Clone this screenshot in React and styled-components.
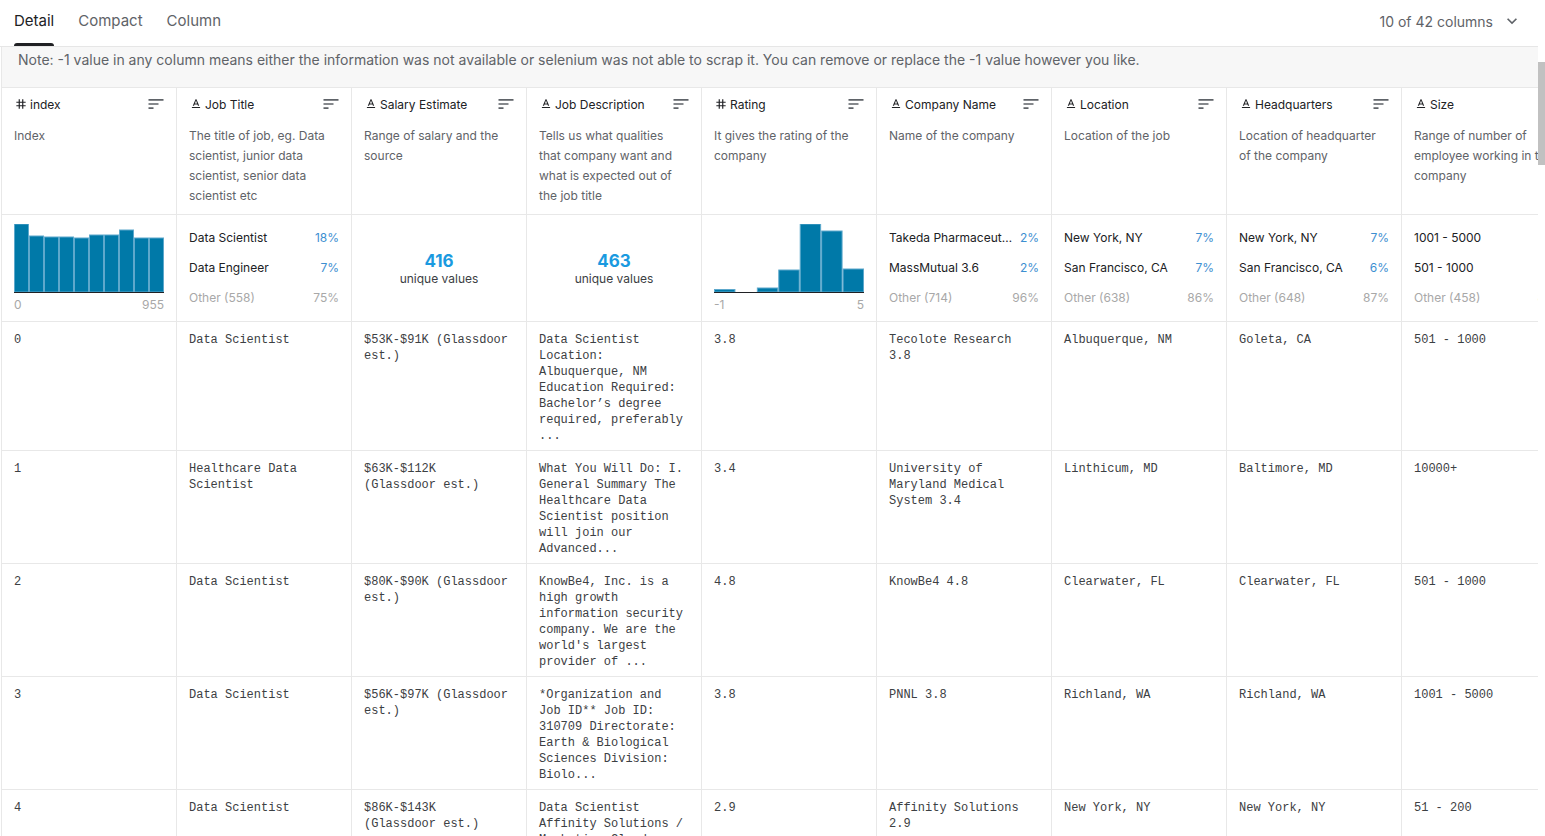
import React from "react";
import styled, { createGlobalStyle, css } from "styled-components";
import { MdTag, MdTextFormat, MdSort, MdExpandMore } from "react-icons/md";

const GlobalStyle = createGlobalStyle`
  *, *::before, *::after { box-sizing: border-box; }
  html, body {
    margin: 0;
    padding: 0;
    height: 100%;
    overflow: hidden;
    background: #fff;
  }
  body {
    font-family: Inter, "Noto Sans", sans-serif;
    color: #202124;
  }
`;

const columns = [
  {
    name: "index",
    type: "num",
    desc: "Index",
    summary: { kind: "hist", bars: [68, 56, 55, 55, 54, 57, 57, 62, 54, 54], min: "0", max: "955" },
  },
  {
    name: "Job Title",
    type: "str",
    desc: "The title of job, eg. Data scientist, junior data scientist, senior data scientist etc",
    summary: {
      kind: "cat",
      items: [["Data Scientist", "18%"], ["Data Engineer", "7%"]],
      other: ["Other (558)", "75%"],
    },
  },
  {
    name: "Salary Estimate",
    type: "str",
    desc: "Range of salary and the source",
    summary: { kind: "unique", count: 416 },
  },
  {
    name: "Job Description",
    type: "str",
    desc: "Tells us what qualities that company want and what is expected out of the job title",
    summary: { kind: "unique", count: 463 },
  },
  {
    name: "Rating",
    type: "num",
    desc: "It gives the rating of the company",
    summary: { kind: "hist", bars: [2.5, 0, 4, 22, 68, 61, 23], min: "-1", max: "5" },
  },
  {
    name: "Company Name",
    type: "str",
    desc: "Name of the company",
    summary: {
      kind: "cat",
      items: [["Takeda Pharmaceuticals 3.7", "2%"], ["MassMutual 3.6", "2%"]],
      other: ["Other (714)", "96%"],
    },
  },
  {
    name: "Location",
    type: "str",
    desc: "Location of the job",
    summary: {
      kind: "cat",
      items: [["New York, NY", "7%"], ["San Francisco, CA", "7%"]],
      other: ["Other (638)", "86%"],
    },
  },
  {
    name: "Headquarters",
    type: "str",
    desc: "Location of headquarter of the company",
    summary: {
      kind: "cat",
      items: [["New York, NY", "7%"], ["San Francisco, CA", "6%"]],
      other: ["Other (648)", "87%"],
    },
  },
  {
    name: "Size",
    type: "str",
    desc: "Range of number of employee working in the company",
    summary: {
      kind: "cat",
      items: [["1001 - 5000", "9%"], ["501 - 1000", "8%"]],
      other: ["Other (458)", "83%"],
    },
  },
];

const rows = [
  [
    "0",
    "Data Scientist",
    "$53K-$91K (Glassdoor\nest.)",
    "Data Scientist\nLocation:\nAlbuquerque, NM\nEducation Required:\nBachelor’s degree\nrequired, preferably\n...",
    "3.8",
    "Tecolote Research\n3.8",
    "Albuquerque, NM",
    "Goleta, CA",
    "501 - 1000",
  ],
  [
    "1",
    "Healthcare Data\nScientist",
    "$63K-$112K\n(Glassdoor est.)",
    "What You Will Do: I.\nGeneral Summary The\nHealthcare Data\nScientist position\nwill join our\nAdvanced...",
    "3.4",
    "University of\nMaryland Medical\nSystem 3.4",
    "Linthicum, MD",
    "Baltimore, MD",
    "10000+",
  ],
  [
    "2",
    "Data Scientist",
    "$80K-$90K (Glassdoor\nest.)",
    "KnowBe4, Inc. is a\nhigh growth\ninformation security\ncompany. We are the\nworld's largest\nprovider of ...",
    "4.8",
    "KnowBe4 4.8",
    "Clearwater, FL",
    "Clearwater, FL",
    "501 - 1000",
  ],
  [
    "3",
    "Data Scientist",
    "$56K-$97K (Glassdoor\nest.)",
    "*Organization and\nJob ID** Job ID:\n310709 Directorate:\nEarth & Biological\nSciences Division:\nBiolo...",
    "3.8",
    "PNNL 3.8",
    "Richland, WA",
    "Richland, WA",
    "1001 - 5000",
  ],
  [
    "4",
    "Data Scientist",
    "$86K-$143K\n(Glassdoor est.)",
    "Data Scientist\nAffinity Solutions /\nMarketing Cloud\nSeeks a...",
    "2.9",
    "Affinity Solutions\n2.9",
    "New York, NY",
    "New York, NY",
    "51 - 200",
  ],
];

const Page = styled.div`
  display: flex;
  height: 836px;
  overflow: hidden;
`;

const Main = styled.div`
  width: 1538px;
  flex: none;
  display: flex;
  flex-direction: column;
  overflow: hidden;
`;

const ScrollTrack = styled.div`
  flex: 1;
  background: #fff;
`;

const ScrollThumb = styled.div`
  margin-top: 62px;
  height: 103px;
  background: #c1c1c1;
`;

const TabBar = styled.div`
  height: 47px;
  flex: none;
  display: flex;
  justify-content: space-between;
  align-items: stretch;
  padding: 0 16px 0 14px;
  border-bottom: 1px solid #e6e6e6;
`;

const Tabs = styled.div`
  display: flex;
  gap: 24px;
`;

const Tab = styled.div`
  position: relative;
  padding-top: 11px;
  font-size: 15px;
  line-height: 20px;
  color: ${({ $active }) => ($active ? "#202124" : "#5f6368")};

  ${({ $active }) =>
    $active &&
    css`
      &::after {
        content: "";
        position: absolute;
        left: 0;
        right: 0;
        bottom: 0;
        height: 3px;
        border-radius: 3px 3px 0 0;
        background: #202124;
      }
    `}
`;

const ColumnPicker = styled.div`
  display: flex;
  align-items: center;
  gap: 9px;
  padding-bottom: 4px;
  font-size: 14px;
  color: #5f6368;

  svg {
    width: 20px;
    height: 20px;
    color: #5f6368;
  }
`;

const ScrollArea = styled.div`
  flex: 1;
  margin-left: 1px;
  border-left: 1px solid #e8e8e8;
  overflow: hidden;
`;

const Note = styled.div`
  height: 41px;
  padding: 3px 16px 0;
  background: #f7f7f7;
  border-bottom: 1px solid #e8e8e8;
  font-size: 14px;
  line-height: 20px;
  color: #5f6368;
  white-space: nowrap;
`;

const Grid = styled.div`
  display: grid;
  grid-template-columns: repeat(9, 175px);
  width: max-content;
`;

const Cell = styled.div`
  border-right: 1px solid #e8e8e8;
  border-bottom: 1px solid #e8e8e8;
  overflow: hidden;
`;

const HeaderCell = styled(Cell)`
  padding: 8px 12px 8px;
`;

const TitleRow = styled.div`
  display: flex;
  align-items: center;
  justify-content: space-between;
  height: 16px;
  margin-bottom: 14px;

  > svg {
    width: 20px;
    height: 20px;
    color: #5f6368;
    margin-right: -2px;
  }
`;

const TitleName = styled.div`
  display: flex;
  align-items: center;
  gap: 2px;
  font-size: 12px;
  color: #202124;
  white-space: nowrap;

  svg {
    width: 14px;
    height: 14px;
    color: #202124;
  }
`;

const Desc = styled.div`
  font-size: 12px;
  line-height: 20px;
  color: #5f6368;
  width: 146px;
  white-space: normal;
`;

const summaryPadding = {
  hist: "9px 12px 8px",
  unique: "9px 12px 7px",
  cat: "7px 12px 9px",
};

const SummaryCell = styled(Cell)`
  padding: ${({ $kind }) => summaryPadding[$kind]};
  display: flex;
  flex-direction: column;
  justify-content: ${({ $kind }) => ($kind === "unique" ? "center" : "flex-start")};
  align-items: ${({ $kind }) => ($kind === "unique" ? "center" : "stretch")};
`;

const CatRow = styled.div`
  height: 30px;
  width: 150px;
  display: flex;
  align-items: center;
  gap: 6px;
  font-size: 12px;
  white-space: nowrap;
  color: ${({ $muted }) => ($muted ? "#a8a8a8" : "#202124")};
`;

const CatLabel = styled.span`
  flex: 1;
  min-width: 0;
  overflow: hidden;
  text-overflow: ellipsis;
`;

const CatPct = styled.span`
  flex: none;
  color: ${({ $muted }) => ($muted ? "#a8a8a8" : "#3d8fd1")};
`;

const HistLabels = styled.div`
  display: flex;
  justify-content: space-between;
  width: 150px;
  margin-top: 4px;
  font-size: 12px;
  line-height: 16px;
  color: #a8a8a8;
`;

const UniqueCount = styled.div`
  font-size: 17px;
  font-weight: 700;
  line-height: 20px;
  color: #1a9ae0;
`;

const UniqueLabel = styled.div`
  font-size: 12px;
  line-height: 16px;
  color: #3c4043;
`;

const DataCell = styled(Cell)`
  padding: 10px 12px 6px;
  font-family: "Liberation Mono", "DejaVu Sans Mono", monospace;
  font-size: 12px;
  line-height: 16px;
  color: #3c4043;
  white-space: pre;
`;

const Histogram = ({ bars, min, max }) => {
  const w = 150 / bars.length;
  return (
    <div>
      <svg width="150" height="69" viewBox="0 0 150 69" style={{ display: "block" }}>
        {bars.map((h, i) =>
          h > 0 ? (
            <rect
              key={i}
              x={i * w + 0.5}
              y={68 - h}
              width={w - 1}
              height={h}
              fill="#0079a8"
              stroke="#5da8cc"
              strokeWidth="1"
            />
          ) : null
        )}
        <rect x="0" y="68" width="150" height="1" fill="#202124" />
      </svg>
      <HistLabels>
        <span>{min}</span>
        <span>{max}</span>
      </HistLabels>
    </div>
  );
};

const Summary = ({ summary }) => {
  if (summary.kind === "hist") {
    return <Histogram bars={summary.bars} min={summary.min} max={summary.max} />;
  }
  if (summary.kind === "unique") {
    return (
      <>
        <UniqueCount>{summary.count}</UniqueCount>
        <UniqueLabel>unique values</UniqueLabel>
      </>
    );
  }
  return (
    <>
      {summary.items.map(([label, pct]) => (
        <CatRow key={label}>
          <CatLabel>{label}</CatLabel>
          <CatPct>{pct}</CatPct>
        </CatRow>
      ))}
      <CatRow $muted>
        <CatLabel>{summary.other[0]}</CatLabel>
        <CatPct $muted>{summary.other[1]}</CatPct>
      </CatRow>
    </>
  );
};

const App = () => {
  return (
    <Page>
      <GlobalStyle />
      <Main>
        <TabBar>
          <Tabs>
            <Tab $active>Detail</Tab>
            <Tab>Compact</Tab>
            <Tab>Column</Tab>
          </Tabs>
          <ColumnPicker>
            10 of 42 columns <MdExpandMore />
          </ColumnPicker>
        </TabBar>
        <ScrollArea>
          <Note>
            Note: -1 value in any column means either the information was not available or selenium was not able to scrap it. You can remove or replace the -1 value however you like.
          </Note>
          <Grid>
            {columns.map((col) => (
              <HeaderCell key={"h" + col.name}>
                <TitleRow>
                  <TitleName>
                    {col.type === "num" ? <MdTag /> : <MdTextFormat />}
                    {col.name}
                  </TitleName>
                  <MdSort />
                </TitleRow>
                <Desc>{col.desc}</Desc>
              </HeaderCell>
            ))}
            {columns.map((col) => (
              <SummaryCell key={"s" + col.name} $kind={col.summary.kind}>
                <Summary summary={col.summary} />
              </SummaryCell>
            ))}
            {rows.map((row, r) =>
              row.map((value, c) => <DataCell key={r + "-" + c}>{value}</DataCell>)
            )}
          </Grid>
        </ScrollArea>
      </Main>
      <ScrollTrack>
        <ScrollThumb />
      </ScrollTrack>
    </Page>
  );
};

export default App;
